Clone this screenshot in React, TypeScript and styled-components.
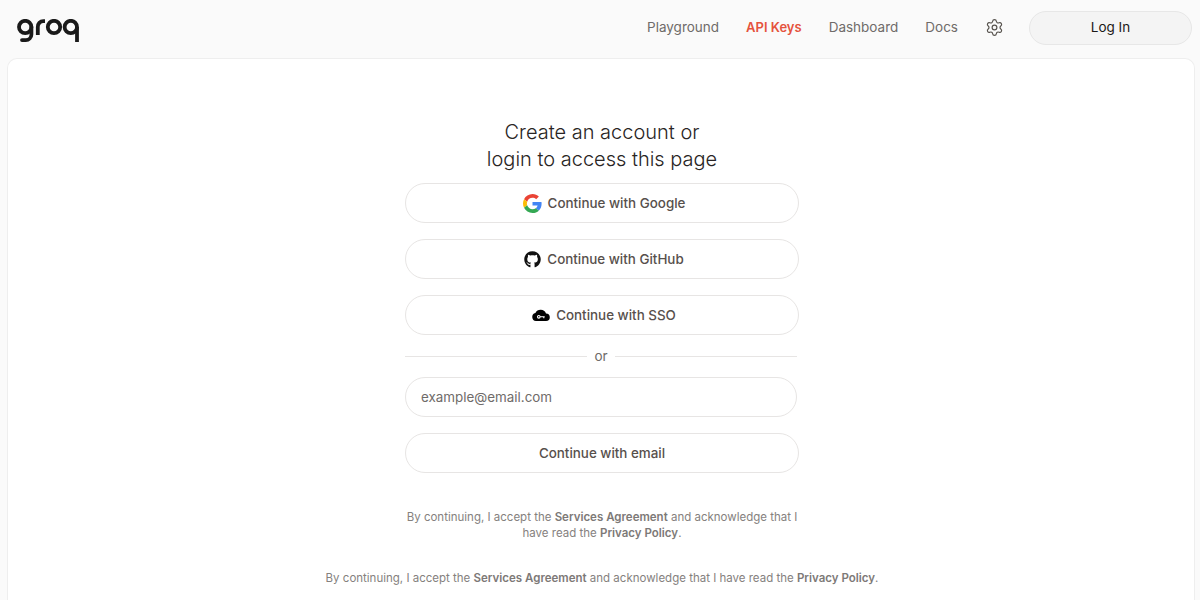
import React from "react";
import styled, { createGlobalStyle } from "styled-components";
import { FaGithub } from "react-icons/fa";
import { Settings } from "lucide-react";

const GlobalStyle = createGlobalStyle`
  html, body {
    margin: 0;
    padding: 0;
    background: #fafafa;
    overflow: hidden;
  }
  * {
    box-sizing: border-box;
  }
`;

const Page = styled.div`
  width: 1200px;
  height: 600px;
  display: flex;
  flex-direction: column;
  overflow: hidden;
`;

const Header = styled.header`
  height: 58px;
  flex: none;
  display: flex;
  align-items: center;
  justify-content: space-between;
  padding: 0 8px 2px 17px;
`;

const LogoMark = styled.svg`
  margin-top: 5px;
`;

const Nav = styled.nav`
  display: flex;
  align-items: center;
`;

const NavLink = styled.a<{ $active?: boolean }>`
  font-family: "Inter", sans-serif;
  font-size: ${(p) => (p.$active ? "13px" : "13.5px")};
  color: ${(p) => (p.$active ? "#e5533d" : "#6f6b69")};
  font-weight: ${(p) => (p.$active ? 600 : 400)};
  margin-right: 27px;
  margin-top: -3px;
`;

const GearIcon = styled(Settings)`
  color: #57534e;
  margin-right: 25px;
  margin-top: -2px;
`;

const LoginButton = styled.button`
  width: 163px;
  height: 34px;
  padding: 0 0 2px;
  border: 1px solid #e7e7e7;
  border-radius: 17px;
  background: #f4f4f4;
  color: #1c1917;
  font-family: "Inter", sans-serif;
  font-size: 13.5px;
`;

const Card = styled.main`
  flex: 1;
  margin: 0 5px 0 7px;
  background: #fff;
  border: 1px solid #eeeeee;
  border-bottom: none;
  border-radius: 10px 10px 0 0;
  display: flex;
  flex-direction: column;
  align-items: center;
  padding: 60px 0 0 2px;
`;

const Title = styled.h1`
  margin: 0 0 10px;
  font-family: "Inter", sans-serif;
  font-size: 20px;
  line-height: 27px;
  font-weight: 300;
  color: #292524;
  text-align: center;
`;

const Form = styled.div`
  width: 394px;
  display: flex;
  flex-direction: column;
  gap: 16px;
`;

const AuthButton = styled.button<{ $withIcon?: boolean }>`
  height: 40px;
  width: 100%;
  display: flex;
  align-items: center;
  justify-content: center;
  gap: 6px;
  padding: 0 0 0 ${(p) => (p.$withIcon ? "4px" : "0")};
  background: #fff;
  border: 1px solid #e7e5e4;
  border-radius: 20px;
  font-family: "Inter", sans-serif;
  font-size: 13.4px;
  font-weight: 500;
  color: #57504c;
`;

const Divider = styled.div`
  width: 392px;
  height: 10px;
  display: flex;
  align-items: center;
  gap: 7px;
  font-family: "Inter", sans-serif;
  font-size: 13.5px;
  color: #6f6b69;
  &::before,
  &::after {
    content: "";
    flex: 1;
    height: 1px;
    background: #e7e5e4;
  }
`;

const EmailInput = styled.input`
  width: 392px;
  height: 40px;
  padding: 0 15px;
  background: #fff;
  border: 1px solid #e7e5e4;
  border-radius: 20px;
  font-family: "Inter", sans-serif;
  font-size: 13.4px;
  outline: none;
  &::placeholder {
    color: #6f6b69;
    opacity: 1;
  }
`;

const Legal = styled.p<{ $wide?: boolean }>`
  margin: ${(p) => (p.$wide ? "29px 0 0" : "36px 0 0")};
  width: ${(p) => (p.$wide ? "auto" : "394px")};
  font-family: "Inter", sans-serif;
  font-size: 11.5px;
  line-height: 16px;
  color: #85817e;
  text-align: center;
  b {
    font-weight: 600;
    color: #7d7977;
  }
`;

const Logo = () => (
  <LogoMark width="62" height="23" viewBox="0 0 62 23" fill="none" stroke="#1a1a1a" strokeWidth="3.8">
    <circle cx="8.2" cy="8" r="6.2" />
    <path d="M14.4 8v7.500a5.600 5.600 0 0 1-5.600 5.600H5" strokeLinecap="round" />
    <path d="M20.800 16V8a5.500 5.500 0 0 1 5.500-5.800h1.700" />
    <circle cx="37" cy="8" r="6.200" />
    <circle cx="53.800" cy="8" r="6.200" />
    <path d="M60 8v15" />
  </LogoMark>
);

const GoogleIcon = () => (
  <svg width="19" height="19" viewBox="0 0 48 48">
    <path fill="#EA4335" d="M24 9.500c3.500 0 6.700 1.200 9.200 3.600l6.900-6.900C35.900 2.400 30.500 0 24 0 14.600 0 6.500 5.400 2.600 13.200l8 6.200C12.500 13.600 17.800 9.500 24 9.500z" />
    <path fill="#4285F4" d="M47 24.500c0-1.600-.1-3.100-.4-4.500H24v9h12.900c-.6 3-2.300 5.500-4.800 7.200l7.700 6c4.500-4.200 7.200-10.300 7.200-17.700z" />
    <path fill="#FBBC05" d="M10.600 28.600c-.5-1.500-.8-3-.8-4.600s.3-3.200.8-4.600l-8-6.200C.9 16.500 0 20.100 0 24s.9 7.500 2.600 10.800l8-6.200z" />
    <path fill="#34A853" d="M24 48c6.500 0 11.900-2.100 15.900-5.800l-7.700-6c-2.200 1.400-5 2.300-8.200 2.300-6.200 0-11.500-4.100-13.400-9.900l-8 6.200C6.500 42.600 14.600 48 24 48z" />
  </svg>
);

const CloudKeyIcon = () => (
  <svg width="18" height="12" viewBox="0 0 18 12">
    <path fill="#000" d="M4 12a4 4 0 0 1-.6-7.900A5.800 5.800 0 0 1 14 4.400 3.800 3.800 0 0 1 14 12z" />
    <circle cx="6.800" cy="7.800" r="1.300" fill="none" stroke="#fff" strokeWidth="1.100" />
    <path d="M8.100 7.800h4.600M11.800 7.800v1.400" stroke="#fff" strokeWidth="1.100" fill="none" />
  </svg>
);

const App = () => {
  return (
    <Page>
      <GlobalStyle />
      <Header>
        <Logo />
        <Nav>
          <NavLink>Playground</NavLink>
          <NavLink $active>API Keys</NavLink>
          <NavLink>Dashboard</NavLink>
          <NavLink>Docs</NavLink>
          <GearIcon size={19} strokeWidth={1.5} />
          <LoginButton>Log In</LoginButton>
        </Nav>
      </Header>
      <Card>
        <Title>
          Create an account or
          <br />
          login to access this page
        </Title>
        <Form>
          <AuthButton $withIcon>
            <GoogleIcon />
            Continue with Google
          </AuthButton>
          <AuthButton $withIcon>
            <FaGithub size={17} color="#111" />
            Continue with GitHub
          </AuthButton>
          <AuthButton $withIcon>
            <CloudKeyIcon />
            Continue with SSO
          </AuthButton>
          <Divider>or</Divider>
          <EmailInput placeholder="example@email.com" />
          <AuthButton>Continue with email</AuthButton>
        </Form>
        <Legal>
          By continuing, I accept the <b>Services Agreement</b> and acknowledge that I have read the{" "}
          <b>Privacy Policy</b>.
        </Legal>
        <Legal $wide>
          By continuing, I accept the <b>Services Agreement</b> and acknowledge that I have read the{" "}
          <b>Privacy Policy</b>.
        </Legal>
      </Card>
    </Page>
  );
};

export default App;
